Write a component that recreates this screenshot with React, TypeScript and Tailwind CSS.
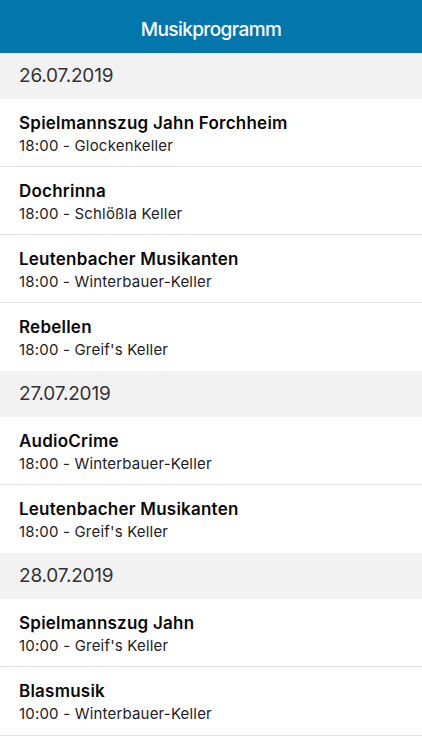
import React from "react";

type Item = { title: string; sub: string };
type Section = { date: string; items: Item[] };

const data: Section[] = [
  {
    date: "26.07.2019",
    items: [
      { title: "Spielmannszug Jahn Forchheim", sub: "18:00 - Glockenkeller" },
      { title: "Dochrinna", sub: "18:00 - Schlößla Keller" },
      { title: "Leutenbacher Musikanten", sub: "18:00 - Winterbauer-Keller" },
      { title: "Rebellen", sub: "18:00 - Greif's Keller" },
    ],
  },
  {
    date: "27.07.2019",
    items: [
      { title: "AudioCrime", sub: "18:00 - Winterbauer-Keller" },
      { title: "Leutenbacher Musikanten", sub: "18:00 - Greif's Keller" },
    ],
  },
  {
    date: "28.07.2019",
    items: [
      { title: "Spielmannszug Jahn", sub: "10:00 - Greif's Keller" },
      { title: "Blasmusik", sub: "10:00 - Winterbauer-Keller" },
    ],
  },
];

export default function App() {
  return (
    <div
      className="w-[422px] h-[750px] bg-white overflow-hidden flex flex-col"
      style={{ fontFamily: "Inter, 'Noto Sans', sans-serif" }}
    >
      <div className="h-[53px] bg-[#0377ab] flex items-center justify-center shrink-0 pt-[7px]">
        <span className="text-white text-[19px] font-medium tracking-[-0.6px]">Musikprogramm</span>
      </div>
      {data.map((s) => (
        <div key={s.date} className="flex flex-col">
          <div className="h-[46px] bg-[#f2f2f2] flex items-center pl-[19px]">
            <span className="text-[19px] text-[#333333] tracking-[-0.2px]">{s.date}</span>
          </div>
          {s.items.map((it, i) => (
            <div
              key={i}
              className={
                "h-[68px] flex flex-col justify-center pl-[19px] pt-[2px] " +
                (i < s.items.length - 1 ? "border-b border-[#e3e3e3]" : "")
              }
            >
              <span className="text-[17px] leading-[22px] font-semibold text-[#0a0a0a] tracking-[0.23px]">
                {it.title}
              </span>
              <span className="text-[15px] leading-[20px] mt-[2px] text-[#1c1c1c] tracking-[0.19px]">
                {it.sub}
              </span>
            </div>
          ))}
        </div>
      ))}
      <div className="border-t border-[#e3e3e3]" />
    </div>
  );
}
